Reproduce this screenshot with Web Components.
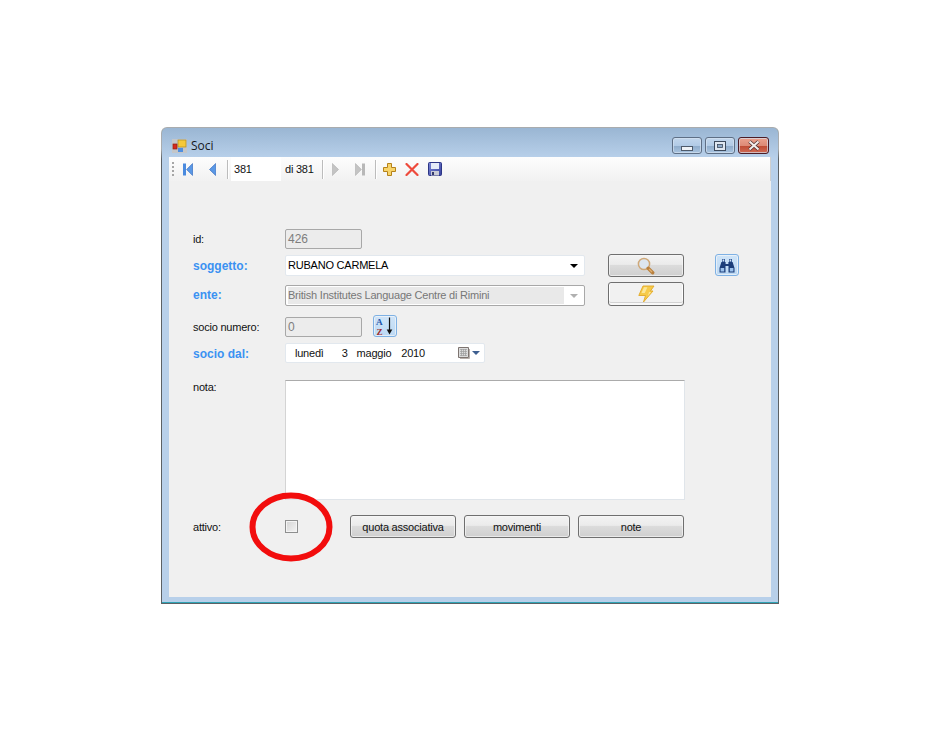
<!DOCTYPE html>
<html lang="it">
<head>
<meta charset="utf-8">
<title>Soci</title>
<style>
  html, body { margin: 0; background: #fff; }
  body {
    width: 940px;
    height: 732px;
    overflow: hidden;
    font: 11px "Liberation Sans", Arial, sans-serif;
    letter-spacing: -.22px;
    color: #111;
  }
</style>
</head>
<body>

<so-window title="Soci">
  <so-toolbar slot="toolbar"></so-toolbar>

  <so-row label="id:" style="margin-top:48px;height:20px;--label-shift:0">
    <so-input value="426" disabled style="width:77px;height:20px"></so-input>
  </so-row>

  <so-row label="soggetto:" strong style="margin-top:5px;height:23px">
    <so-combo value="RUBANO CARMELA" style="margin-top:1px"></so-combo>
    <so-button wide style="margin-left:23px"><so-icon name="lens"></so-icon></so-button>
    <so-button tool style="margin-left:31px"><so-icon name="binoculars"></so-icon></so-button>
  </so-row>

  <so-row label="ente:" strong style="margin-top:5px;height:24px">
    <so-combo value="British Institutes Language Centre di Rimini" disabled style="margin-top:3px"></so-combo>
    <so-button wide faded style="margin-left:23px"><so-icon name="bolt"></so-icon></so-button>
  </so-row>

  <so-row label="socio numero:" style="margin-top:9px;height:22px">
    <so-input value="0" disabled style="width:77px;height:20px;margin-top:2px"></so-input>
    <so-button tool style="margin-left:11px"><so-icon name="sort"></so-icon></so-button>
  </so-row>

  <so-row label="socio dal:" strong style="margin-top:6px;height:20px">
    <so-date></so-date>
  </so-row>

  <so-row label="nota:" top style="margin-top:17px;height:120px">
    <so-note></so-note>
  </so-row>

  <so-row label="attivo:" style="margin-top:15px;height:23px">
    <so-check></so-check>
    <so-button style="margin-left:52px;width:106px">quota associativa</so-button>
    <so-button style="margin-left:8px;width:106px">movimenti</so-button>
    <so-button style="margin-left:8px;width:106px">note</so-button>
    <svg class="mark" width="84" height="70" viewBox="0 0 84 70" style="position:absolute;left:80px;top:-23px">
      <ellipse cx="42" cy="35" rx="38.5" ry="31.5" fill="none" stroke="#f20d0d" stroke-width="6"/>
    </svg>
  </so-row>
</so-window>

<script>
const FONT = `font: 11px "Liberation Sans", Arial, sans-serif; letter-spacing: -.22px;`;

const ICONS = {
  first: `<svg width="10" height="13" viewBox="0 0 10 13"><rect x="0" y="0.5" width="3" height="12" fill="#4a8ade"/><path d="M9.6 0.5 3.6 6.5l6 6z" fill="#5a98e6" stroke="#2a62b8" stroke-width=".6"/></svg>`,
  prev: `<svg width="7" height="13" viewBox="0 0 7 13"><path d="M6.7 0.5 0.5 6.5l6.2 6z" fill="#5a98e6" stroke="#2a62b8" stroke-width=".6"/></svg>`,
  next: `<svg width="7" height="13" viewBox="0 0 7 13"><path d="M.3 0.5 6.5 6.5l-6.2 6z" fill="#c4c4c4" stroke="#adadad" stroke-width=".6"/></svg>`,
  last: `<svg width="10" height="13" viewBox="0 0 10 13"><path d="M.4 0.5 6.4 6.5l-6 6z" fill="#c4c4c4" stroke="#adadad" stroke-width=".6"/><rect x="7" y="0.5" width="3" height="12" fill="#b8b8b8"/></svg>`,
  plus: `<svg width="13" height="13" viewBox="0 0 13 13"><path d="M4.5.5h4v4h4v4h-4v4h-4v-4h-4v-4h4z" fill="#f8d46a" stroke="#b5821a"/></svg>`,
  cross: `<svg width="14" height="13" viewBox="0 0 14 13"><path d="M1.5 1 12.5 12M12.5 1 1.5 12" stroke="#ee4a3c" stroke-width="2.2" stroke-linecap="round" fill="none"/></svg>`,
  save: `<svg width="14" height="14" viewBox="0 0 14 14"><defs><linearGradient id="fd" x1="0" y1="0" x2="1" y2="1"><stop offset="0" stop-color="#7c88d8"/><stop offset="1" stop-color="#39439e"/></linearGradient></defs><rect x=".5" y=".5" width="13" height="13" rx="1" fill="url(#fd)" stroke="#2c3585"/><rect x="3" y="1" width="8" height="6" fill="#e6ecf8"/><rect x="3" y="9" width="8" height="4.5" fill="#c9cbd6"/><rect x="4" y="10" width="2" height="3" fill="#33396e"/></svg>`,
  lens: `<svg width="18" height="18" viewBox="0 0 18 18"><circle cx="7" cy="7" r="5.6" fill="#dde6ef" stroke="#cfa878" stroke-width="1.5"/><path d="M11.2 11.2l4.5 4.5" stroke="#b9803e" stroke-width="3.4" stroke-linecap="round"/><path d="M12 12l3 3" stroke="#e0b070" stroke-width="1.2"/></svg>`,
  bolt: `<svg width="17" height="18" viewBox="0 0 17 18"><path d="M5 1h11l-3.6 5H15L5.5 17l2-6.5H.8z" fill="#f6cb4a" stroke="#e2a826" stroke-width=".9" stroke-linejoin="round"/><path d="M6 2.2h3.4L6.8 8H3.5zM11 7h2l-3 4z" fill="#fbe79a"/></svg>`,
  binoculars: `<svg width="16" height="15" viewBox="0 0 16 15"><path d="M3 1h3v3H3zM10 1h3v3h-3z" fill="#2a4f8e"/><path d="M3.6 1.6h1.6v1.8H3.6zM10.6 1.6h1.6v1.8h-1.6z" fill="#d6e6f7"/><path d="M2.4 4h4.2v2H9.4V4h4.2L15.5 10v4.4h-6V8H6.5v6.4h-6V10z" fill="#1d3e7a"/><path d="M1.6 10h3.6v3.4H1.6zM10.8 10h3.6v3.4h-3.6z" fill="#9cc2ec"/></svg>`,
  sort: `<svg width="22" height="21" viewBox="0 0 22 21"><text x="2" y="8.6" font-family="Liberation Serif,serif" font-weight="700" font-size="9.2" fill="#1e55a8">A</text><text x="2.4" y="19.4" font-family="Liberation Serif,serif" font-weight="700" font-size="9.2" fill="#a02c2c">Z</text><path d="M15.5 1.5V16" stroke="#111" stroke-width="1.2"/><path d="M12.7 13.5h5.6L15.5 18.5z" fill="#111"/></svg>`,
  calendar: `<svg width="13" height="14" viewBox="0 0 13 14"><path d="M.5 1.5h10v10H.5z" fill="#dcdcdc" stroke="#7d7470"/><path d="M2 3.5h7M2 5.5h7M2 7.5h7M2 9.5h7M3.5 3v7M5.5 3v7M7.5 3v7" stroke="#9c9c9c" stroke-width=".7"/><path d="M11.5 3v9.5H2" fill="none" stroke="#b8b0ac"/></svg>`
};

class SoIcon extends HTMLElement {
  connectedCallback() {
    if (this.shadowRoot) return;
    this.attachShadow({mode: 'open'}).innerHTML = `
      <style>:host { display: inline-flex; flex: none; } svg { display: block; }</style>
      ${ICONS[this.getAttribute('name')]}`;
  }
}

class SoWindow extends HTMLElement {
  constructor() {
    super();
    this.attachShadow({mode: 'open'}).innerHTML = `
      <style>
        :host {
          display: block;
          box-sizing: border-box;
          width: 618px;
          height: 477px;
          margin: 127px 0 0 161px;
          border: 1px solid transparent;
          border-radius: 6px 6px 0 0;
          background:
            linear-gradient(#9ab6d3, #b8d0ea 30px) padding-box,
            linear-gradient(#a9acae 0, #a9acae 22px, #5c6165 32px) border-box;
          box-shadow: inset 0 -1px 0 #2fa3b5;
          ${FONT}
        }
        .title {
          display: flex;
          align-items: center;
          box-sizing: border-box;
          height: 29px;
          padding: 6px 9px 0 10px;
        }
        .app { margin-right: 4px; }
        .name { flex: 1; font: 12px "Open Sans", "Noto Sans", sans-serif; letter-spacing: 0; color: #15181c; }
        .ctl {
          box-sizing: border-box;
          display: flex;
          align-items: center;
          justify-content: center;
          width: 30px;
          height: 17px;
          margin-left: 3px;
          border: 1px solid #5e6f85;
          border-radius: 3px;
          background: linear-gradient(#c2d6ec 0, #b2cbe6 50%, #8eabca 52%, #a9c4e0 100%);
          box-shadow: inset 0 0 0 1px #d5e3f2aa;
        }
        .ctl.close {
          width: 31px;
          border-color: #4c1c26;
          background: linear-gradient(#eba28f 0, #dd8a76 50%, #bf4a33 52%, #cf6b55 100%);
        }
        .body {
          margin: 0 7px;
          height: 440px;
          background: #f0f0f0;
        }
      </style>
      <div class="title">
        <svg class="app" width="15" height="14" viewBox="0 0 15 14">
          <rect x="0" y="0" width="15" height="14" fill="#c4c6c8"/>
          <rect x="6" y="1" width="8" height="7" fill="#f5c93a" stroke="#b08d20" stroke-width=".7"/>
          <rect x="1" y="5" width="4" height="5" fill="#d8281c" stroke="#8a2418" stroke-width=".7"/>
          <rect x="6" y="9" width="5" height="4" fill="#4f8fe0"/>
        </svg>
        <span class="name">${this.getAttribute('title')}</span>
        <div class="ctl"><svg width="12" height="5" style="margin-top:5px"><rect x=".5" y=".5" width="11" height="4" fill="#eef2f6" stroke="#4e5a6a"/></svg></div>
        <div class="ctl"><svg width="12" height="10"><rect x=".5" y=".5" width="11" height="9" fill="#dfe7f0" stroke="#3d4a5c"/><rect x="3.5" y="3.5" width="5" height="3" fill="#8eabca" stroke="#3d4a5c" stroke-width=".8"/></svg></div>
        <div class="ctl close"><svg width="14" height="11" viewBox="0 0 14 11"><path d="M2.5 1.5 11.5 9.5M11.5 1.5 2.5 9.5" stroke="#4a2a2a" stroke-width="3.6"/><path d="M2.5 1.5 11.5 9.5M11.5 1.5 2.5 9.5" stroke="#f2ecea" stroke-width="2.2"/></svg></div>
      </div>
      <div class="body">
        <slot name="toolbar"></slot>
        <slot></slot>
      </div>`;
  }
}

class SoToolbar extends HTMLElement {
  constructor() {
    super();
    this.attachShadow({mode: 'open'}).innerHTML = `
      <style>
        :host {
          display: flex;
          align-items: center;
          box-sizing: border-box;
          height: 24px;
          background: linear-gradient(#fdfdfd, #f1f1f1);
          box-shadow: inset -1px 0 0 #cfcfcf;
          ${FONT}
          color: #111;
        }
        .grip {
          width: 2px;
          height: 14px;
          margin: 0 9px 0 3px;
          background: repeating-linear-gradient(#a6a6a6 0 2px, transparent 2px 4px);
        }
        .sep { width: 1px; height: 19px; background: #bcbcbc; box-shadow: 1px 0 0 #fff; }
        .pos {
          display: flex;
          align-items: center;
          box-sizing: border-box;
          width: 50px;
          height: 24px;
          margin: 0 4px 0 3px;
          padding-left: 3px;
          background: #fff;
        }
      </style>
      <div class="grip"></div>
      <so-icon name="first"></so-icon>
      <so-icon name="prev" style="margin-left:16px"></so-icon>
      <div class="sep" style="margin-left:11px"></div>
      <div class="pos">381</div>
      <span>di 381</span>
      <div class="sep" style="margin-left:8px"></div>
      <so-icon name="next" style="margin-left:9px"></so-icon>
      <so-icon name="last" style="margin-left:16px"></so-icon>
      <div class="sep" style="margin-left:10px"></div>
      <so-icon name="plus" style="margin-left:7px"></so-icon>
      <so-icon name="cross" style="margin-left:9px"></so-icon>
      <so-icon name="save" style="margin-left:9px"></so-icon>`;
  }
}

class SoRow extends HTMLElement {
  constructor() {
    super();
    const strong = this.hasAttribute('strong');
    const top = this.hasAttribute('top');
    this.attachShadow({mode: 'open'}).innerHTML = `
      <style>
        :host {
          display: flex;
          position: relative;
          padding-left: 24px;
          ${FONT}
          color: #111;
        }
        label {
          flex: none;
          width: 92px;
          align-self: ${top ? 'flex-start' : 'center'};
          padding-top: var(--label-shift, 1px);
          ${strong ? 'font-weight: 700; font-size: 12px; letter-spacing: 0; color: #3b92f2;' : ''}
        }
      </style>
      <label>${this.getAttribute('label')}</label>
      <slot></slot>`;
  }
}

class SoInput extends HTMLElement {
  constructor() {
    super();
    this.attachShadow({mode: 'open'}).innerHTML = `
      <style>
        :host {
          display: flex;
          align-items: center;
          flex: none;
          box-sizing: border-box;
          padding-left: 2px;
          border: 1px solid #a8a8a8;
          border-radius: 2px;
          background: #ececec;
          color: #7e7e7e;
          font-size: 12px;
          letter-spacing: 0;
        }
      </style>${this.getAttribute('value')}`;
  }
}

class SoCombo extends HTMLElement {
  constructor() {
    super();
    const off = this.hasAttribute('disabled');
    this.attachShadow({mode: 'open'}).innerHTML = `
      <style>
        :host {
          display: flex;
          align-items: center;
          flex: none;
          box-sizing: border-box;
          width: 300px;
          height: 21px;
          padding: 1px 6px 1px 2px;
          background: #fff;
          border: 1px solid ${off ? '#a8a8a8' : '#e2e8ee'};
          border-radius: 2px;
          ${FONT}
          color: ${off ? '#777' : '#000'};
        }
        .text {
          flex: 1;
          box-sizing: border-box;
          height: 100%;
          display: flex;
          align-items: center;
          padding-bottom: 2px;
          margin-right: 6px;
          ${off ? 'background: #e9e9e9;' : ''}
        }
        .arrow {
          width: 0; height: 0;
          border: 4px solid transparent;
          border-top-color: ${off ? '#b0b0b0' : '#000'};
          border-bottom: 0;
        }
      </style>
      <div class="text">${this.getAttribute('value')}</div>
      <div class="arrow"></div>`;
  }
}

class SoDate extends HTMLElement {
  constructor() {
    super();
    this.attachShadow({mode: 'open'}).innerHTML = `
      <style>
        :host {
          display: flex;
          align-items: center;
          flex: none;
          box-sizing: border-box;
          width: 200px;
          height: 20px;
          padding: 0 4px 0 9px;
          background: #fff;
          border: 1px solid #e2e8ee;
          border-radius: 2px;
          ${FONT}
          color: #111;
        }
        .fill { flex: 1; }
        .arrow { width: 0; height: 0; margin-left: 1px; border: 4px solid transparent; border-top-color: #3e5f90; border-bottom: 0; }
      </style>
      <span>lunedì</span>
      <span style="margin-left:18px">3</span>
      <span style="margin-left:9px">maggio</span>
      <span style="margin-left:10px">2010</span>
      <span class="fill"></span>
      <so-icon name="calendar"></so-icon>
      <div class="arrow"></div>`;
  }
}

class SoNote extends HTMLElement {
  constructor() {
    super();
    this.attachShadow({mode: 'open'}).innerHTML = `
      <style>
        :host {
          display: block;
          flex: none;
          box-sizing: border-box;
          width: 400px;
          height: 120px;
          background: #fff;
          border: 1px solid #e0e5ea;
          border-top-color: #ababab;
          border-left-color: #d4d4d4;
        }
      </style>`;
  }
}

class SoButton extends HTMLElement {
  constructor() {
    super();
    const tool = this.hasAttribute('tool');
    const faded = this.hasAttribute('faded');
    const wide = this.hasAttribute('wide');
    const bg = tool ? 'linear-gradient(#cfe4f8, #bcd9f4)'
      : faded ? '#f1f1f1'
      : 'linear-gradient(#f3f3f3 0, #ebebeb 45%, #dcdcdc 47%, #cfcfcf 100%)';
    this.attachShadow({mode: 'open'}).innerHTML = `
      <style>
        :host {
          display: flex;
          align-items: center;
          justify-content: center;
          flex: none;
          box-sizing: border-box;
          height: ${tool ? '22px' : '100%'};
          ${wide ? 'width: 76px;' : ''}
          ${tool ? 'width: 24px;' : ''}
          border: 1px solid ${tool ? '#7eb1e4' : '#6f6f6f'};
          border-radius: 3px;
          background: ${bg};
          box-shadow: ${faded ? 'inset 0 -2px 0 #f8f8f8, inset 0 -3px 0 #d2d2d2, inset 1px 0 0 #fff, inset -1px 0 0 #fff' : 'inset 0 0 0 1px #f8f8f8aa'};
          ${FONT}
          color: #111;
        }
      </style>
      <slot></slot>`;
  }
}

class SoCheck extends HTMLElement {
  constructor() {
    super();
    this.attachShadow({mode: 'open'}).innerHTML = `
      <style>
        :host {
          display: block;
          flex: none;
          align-self: center;
          box-sizing: border-box;
          width: 13px;
          height: 13px;
          border: 1px solid #8e8f8f;
          background: linear-gradient(135deg, #d4d4d4, #f4f4f4);
          box-shadow: inset 0 0 0 1px #f4f4f4;
        }
      </style>`;
  }
}

customElements.define('so-icon', SoIcon);
customElements.define('so-window', SoWindow);
customElements.define('so-toolbar', SoToolbar);
customElements.define('so-row', SoRow);
customElements.define('so-input', SoInput);
customElements.define('so-combo', SoCombo);
customElements.define('so-date', SoDate);
customElements.define('so-note', SoNote);
customElements.define('so-button', SoButton);
customElements.define('so-check', SoCheck);
</script>
</body>
</html>
